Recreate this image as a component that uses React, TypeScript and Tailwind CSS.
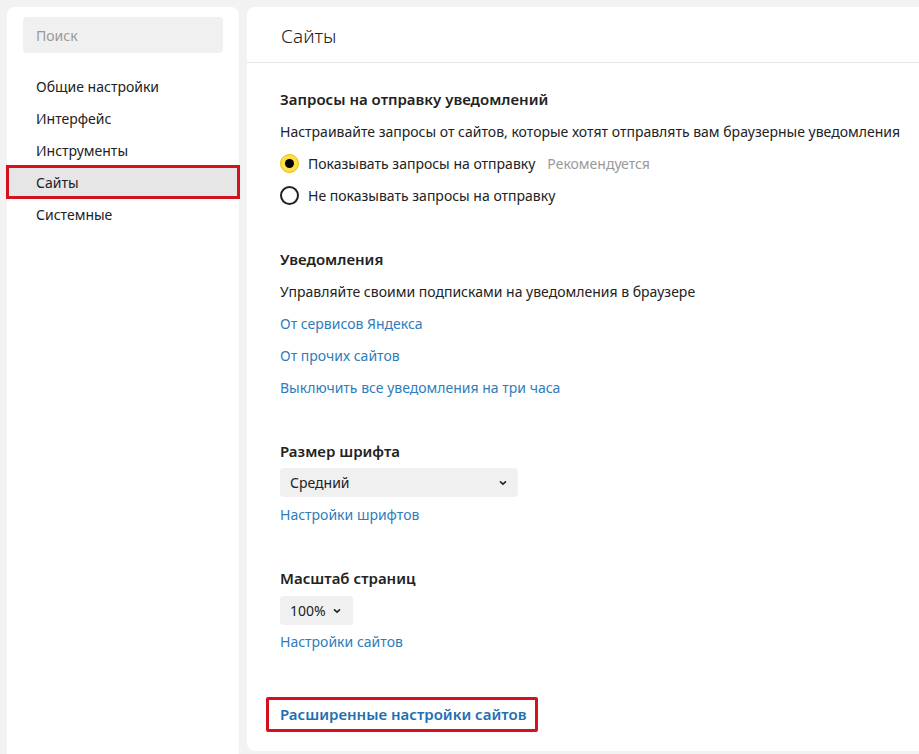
import React from 'react';

const navItems = ['Общие настройки', 'Интерфейс', 'Инструменты', 'Сайты', 'Системные'];

function Chevron() {
  return (
    <svg width="10" height="10" viewBox="0 0 10 10" className="text-[#222]">
      <path d="M2.5 3.8 L5 6.2 L7.5 3.8" fill="none" stroke="currentColor" strokeWidth="1.6" strokeLinecap="round" strokeLinejoin="round" />
    </svg>
  );
}

function Radio({ checked }: { checked: boolean }) {
  if (checked) {
    return (
      <span className="flex h-[19px] w-[19px] items-center justify-center rounded-full border border-[#e6c200] bg-[#ffdb4d]">
        <span className="h-[9px] w-[9px] rounded-full bg-black" />
      </span>
    );
  }
  return <span className="block h-[19px] w-[19px] rounded-full border-2 border-[#222]" />;
}

export default function App() {
  return (
    <div className="flex h-[754px] w-[919px] gap-2 overflow-hidden bg-[#f2f2f2] pl-[7px] pt-[7px] font-['Noto_Sans',sans-serif] text-[14px] text-[#222]">
      <aside className="w-[232px] shrink-0 rounded-t-[8px] bg-white pt-[10px]">
        <div className="mx-4 flex h-[36px] items-center rounded-[4px] bg-[#f0f0f0] px-[13px] text-[#999]">Поиск</div>
        <nav className="mt-[17px]">
          {navItems.map((item) => (
            <div
              key={item}
              className={
                item === 'Сайты'
                  ? 'relative flex h-8 items-center bg-[#e6e6e6] pl-[29px] outline outline-[3px] outline-offset-[-2px] outline-[#d4121e]'
                  : 'flex h-8 items-center pl-[29px]'
              }
            >
              {item}
            </div>
          ))}
        </nav>
      </aside>

      <main className="flex h-[744px] flex-1 flex-col rounded-l-[8px] bg-white">
        <div className="flex h-[56px] items-center border-b border-[#e5e5e5] pl-[34px] pt-[3px] text-[19px] font-light">Сайты</div>

        <div className="flex flex-col pl-[33px] pt-[20px]">
          <section className="flex flex-col">
            <h2 className="flex h-8 items-center text-[15px] font-semibold">Запросы на отправку уведомлений</h2>
            <p className="flex h-8 items-center whitespace-nowrap">
              Настраивайте запросы от сайтов, которые хотят отправлять вам браузерные уведомления
            </p>
            <label className="flex h-8 items-center gap-[9px]">
              <Radio checked />
              <span>Показывать запросы на отправку</span>
              <span className="ml-[3px] text-[#999]">Рекомендуется</span>
            </label>
            <label className="flex h-8 items-center gap-[9px]">
              <Radio checked={false} />
              <span>Не показывать запросы на отправку</span>
            </label>
          </section>

          <section className="mt-[32px] flex flex-col">
            <h2 className="flex h-8 items-center text-[15px] font-semibold">Уведомления</h2>
            <p className="flex h-8 items-center">Управляйте своими подписками на уведомления в браузере</p>
            <a className="flex h-8 items-center text-[#2f7cbb]">От сервисов Яндекса</a>
            <a className="flex h-8 items-center text-[#2f7cbb]">От прочих сайтов</a>
            <a className="flex h-8 items-center text-[#2f7cbb]">Выключить все уведомления на три часа</a>
          </section>

          <section className="mt-[32px] flex flex-col">
            <h2 className="flex h-8 items-center text-[15px] font-semibold">Размер шрифта</h2>
            <div className="mt-[1px] flex h-[29px] w-[238px] items-center justify-between rounded-[4px] bg-[#f0f0f0] pl-[10px] pr-[10px]">
              <span>Средний</span>
              <Chevron />
            </div>
            <a className="mt-[1px] flex h-8 items-center text-[#2f7cbb]">Настройки шрифтов</a>
          </section>

          <section className="mt-[32px] flex flex-col">
            <h2 className="flex h-8 items-center text-[15px] font-semibold">Масштаб страниц</h2>
            <div className="mt-[2px] flex h-[29px] w-[73px] items-center gap-[6px] rounded-[4px] bg-[#f0f0f0] pl-[10px]">
              <span>100%</span>
              <Chevron />
            </div>
            <a className="flex h-8 items-center text-[#2f7cbb]">Настройки сайтов</a>
          </section>

          <div className="mt-[40px] -ml-[14px] flex h-[35px] w-[272px] items-center rounded-[2px] border-[3px] border-[#d4121e] pl-[11px] text-[15px] font-semibold text-[#1f6fb2]">
            Расширенные настройки сайтов
          </div>
        </div>
      </main>
    </div>
  );
}
